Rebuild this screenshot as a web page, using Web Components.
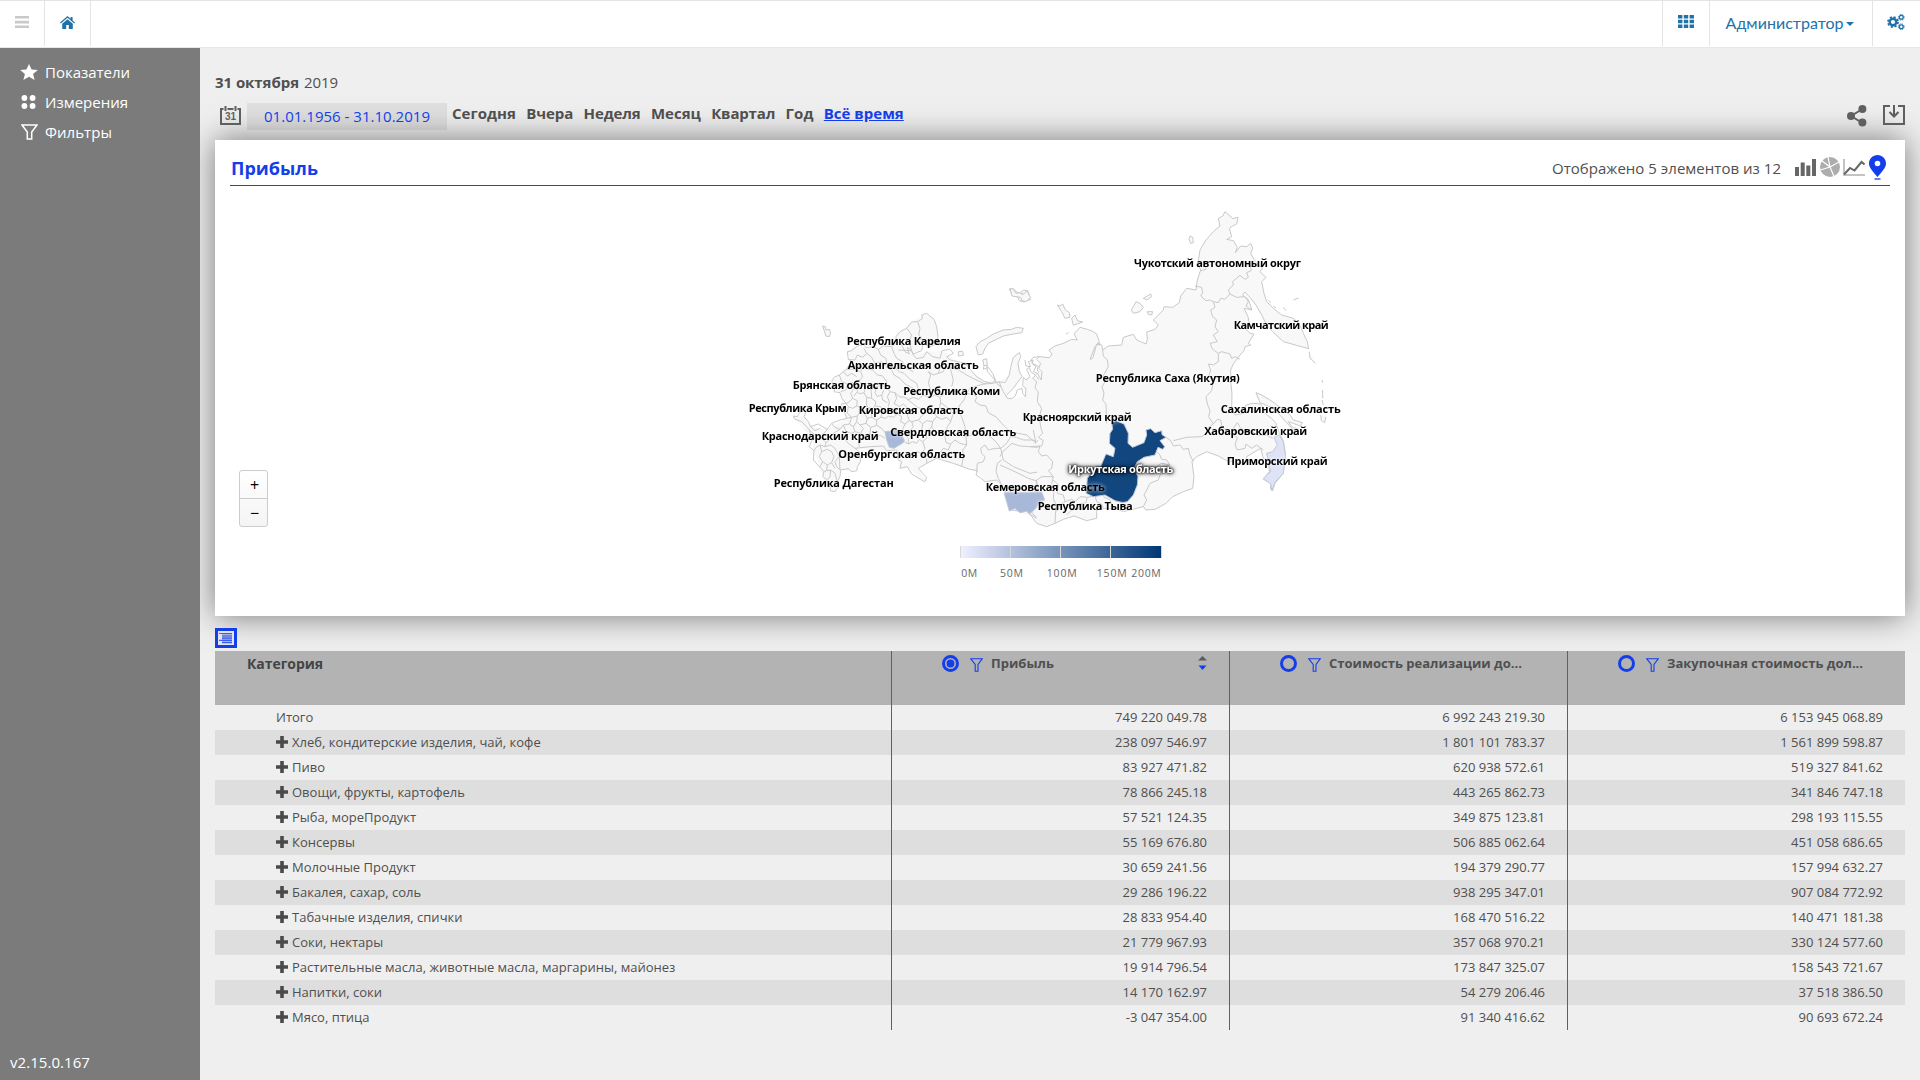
<!DOCTYPE html>
<html lang="ru">
<head>
<meta charset="utf-8">
<title>Прибыль</title>
<style>
html,body{margin:0;height:100%;overflow:hidden}
body{font-family:"Open Sans","Noto Sans",sans-serif;color:#4f4f4f;background:#efefef}
</style>
</head>
<body>
<bi-app></bi-app>
<script>
const define=(name,html,setup)=>customElements.define(name,class extends HTMLElement{
  connectedCallback(){
    if(this.shadowRoot)return;
    const r=this.attachShadow({mode:'open'});
    const t=document.createElement('template');
    t.innerHTML=typeof html==='function'?html(this):html;
    r.append(t.content.cloneNode(true));
    if(setup)setup(this,r);
  }
});

/* Single line of text spread to an exact width through letter-spacing */
define('fit-text','<style>:host{display:inline-block;white-space:nowrap}span{display:inline-block}:host([underline]) span{text-decoration:underline}</style><span><slot></slot></span>',(el,r)=>{
  const w=+el.getAttribute('w'),s=r.querySelector('span');
  const n=el.textContent.length,cur=s.getBoundingClientRect().width;
  if(w&&n)s.style.letterSpacing=((w-cur)/n)+'px';
  if(w)el.style.width=w+'px';
});

const ICONS={
 menu:[14,12,'<path d="M0 0h14v2.6H0zM0 4.8h14v2.6H0zM0 9.4h14V12H0z" fill="#c9c9c9"/>'],
 home:[15,13,'<path d="M7.5 0 0 6.4l.8 1L7.5 1.8l6.7 5.6.8-1-2.4-2V1h-2v1.7zM2.2 7.7V13h4V9h2.6v4h4V7.7L7.5 3.2z" fill="#2272a8"/>'],
 grid:[16,13,'<path d="M0 0h4.4v3.4H0zM5.8 0h4.4v3.4H5.8zM11.6 0H16v3.4h-4.4zM0 4.8h4.4v3.4H0zM5.8 4.8h4.4v3.4H5.8zM11.6 4.8H16v3.4h-4.4zM0 9.6h4.4V13H0zM5.8 9.6h4.4V13H5.8zM11.6 9.6H16V13h-4.4z" fill="#2272a8"/>'],
 gears:[18,16,'<g fill="none" stroke="#2272a8"><circle cx="6" cy="8" r="3.3" stroke-width="2.4"/><circle cx="6" cy="8" r="5" stroke-width="1.8" stroke-dasharray="2.1 1.83"/><circle cx="14.3" cy="3.3" r="1.9" stroke-width="1.3"/><circle cx="14.3" cy="3.3" r="2.8" stroke-width="1" stroke-dasharray="1.3 .9"/><circle cx="14.3" cy="12.7" r="1.9" stroke-width="1.3"/><circle cx="14.3" cy="12.7" r="2.8" stroke-width="1" stroke-dasharray="1.3 .9"/></g>'],
 caret:[8,4,'<path d="M0 0h8L4 4z" fill="#2272a8"/>'],
 star:[18,16,'<path d="m9 0 2.6 5.5 6.2.5-4.7 4 1.5 6L9 12.7 3.4 16l1.5-6L.2 6l6.2-.5z" fill="#fff"/>'],
 dots:[16,14,'<g fill="#fff"><circle cx="3.4" cy="3" r="2.9"/><circle cx="11.6" cy="3" r="2.9"/><circle cx="3.4" cy="11" r="2.9"/><circle cx="11.6" cy="11" r="2.9"/></g>'],
 funnelw:[17,16,'<path d="M1 1h15l-5.3 7v7H6.3V8z" fill="none" stroke="#fff" stroke-width="1.5"/>'],
 funnel:[13,14,'<path d="M.8.8h11.4L8 6.5v6.7H5.2V6.5z" fill="none" stroke="#143eea" stroke-width="1.1"/>'],
 calendar:[21,19,'<path d="M3.500 3H1v15h19V3h-2.500M7.500 3h6" fill="none" stroke="#5f5f5f" stroke-width="2"/><path d="M5.500 0v5M15.500 0v5" stroke="#5f5f5f" stroke-width="2"/><text x="5" y="14.300" textLength="11" font-family="Liberation Sans" font-weight="700" font-size="10" fill="#5f5f5f">31</text>'],
 share:[20,22,'<path d="M15.500 4 4 11l11.500 7" fill="none" stroke="#5f5f5f" stroke-width="2"/><g fill="#5f5f5f"><circle cx="15.400" cy="4" r="4"/><circle cx="4" cy="11" r="4"/><circle cx="15.400" cy="17.600" r="4"/></g>'],
 download:[22,20,'<path d="M7 1H1v18h20V1h-6" fill="none" stroke="#5f5f5f" stroke-width="2"/><path d="M11 0v11M6.500 7l4.500 4.500L15.500 7" fill="none" stroke="#5f5f5f" stroke-width="2"/>'],
 bars:[21,17,'<path d="M0 8h4v9H0zM5.700 3.500h4V17h-4zM11.300 6.500h4V17h-4zM17 0h4v17h-4z" fill="#666"/>'],
 pie:[20,20,'<circle cx="10" cy="10" r="10" fill="#adadad"/><path d="M8 0l2 10L1.500 3.500M10 10 .3 13M10 10l9-5M10 10l4 9.500" fill="none" stroke="#fff" stroke-width="1.200"/>'],
 line:[22,17,'<path d="M1 0v16h21" fill="none" stroke="#b0b0b0" stroke-width="1.500"/><path d="m1 15.500 6-6.500 4.500 2.500 7-8.500 3 2.500" fill="none" stroke="#666" stroke-width="2"/>'],
 pin:[17,25,'<path d="M8.500 0C3.800 0 0 3.700 0 8.500 0 13 4.500 17 8.500 22 12.500 17 17 13 17 8.500 17 3.700 13.200 0 8.500 0zm0 5.700a2.800 2.800 0 1 1 0 5.600 2.800 2.800 0 0 1 0-5.600z" fill="#143eea" fill-rule="evenodd"/><path d="M5.500 24h6" stroke="#143eea" stroke-width="1.300"/>'],
 plus:[12,12,'<path d="M4.200 0h3.600v4.200H12v3.600H7.800V12H4.200V7.800H0V4.200h4.200z" fill="#4a4a4a"/>'],
 radio:[17,17,'<circle cx="8.500" cy="8.500" r="7" fill="none" stroke="#143eea" stroke-width="3"/>'],
 radioon:[17,17,'<circle cx="8.500" cy="8.500" r="7" fill="#b3b3b3" stroke="#143eea" stroke-width="3"/><circle cx="8.500" cy="8.500" r="3.900" fill="#143eea"/>'],
 sort:[9,14,'<path d="M0 4.500 4.500 0 9 4.500z" fill="#5a5a5a"/><path d="M.5 9.500h8L4.500 14z" fill="#143eea"/>'],
 tree:[22,20,'<path d="M1.500 1.500h19v17h-19z" fill="#e2e2ea" stroke="#143eea" stroke-width="3"/><path d="M4 5.500h13M7 8h10M7 10.200h10M4 12.400h13M7 14.600h10" stroke="#143eea" stroke-width="1.200" opacity=".75"/><path d="M7 5h10v10H7z" fill="#143eea" opacity=".3"/>']
};
define('ui-icon',el=>{const [w,h,b]=ICONS[el.getAttribute('name')];
 return `<style>:host{display:block;flex:none;width:${w}px;height:${h}px}svg{display:block}</style><svg width="${w}" height="${h}" viewBox="0 0 ${w} ${h}">${b}</svg>`});

define('top-bar',`<style>
:host{display:flex;box-sizing:border-box;height:48px;background:#fff;border-top:1px solid #e4e4e4;border-bottom:1px solid #e7e7e7;justify-content:space-between;font-family:Lato,"Open Sans",sans-serif;font-size:16px;color:#2272a8}
div{display:flex}
.c{box-sizing:border-box;height:45px;align-items:center;justify-content:center}
.l .c{border-right:1px solid #e4e4e4}.r .c{border-left:1px solid #e4e4e4}
</style>
<div class="l"><div class="c" style="width:45px;padding:0 0 3px 0"><ui-icon name="menu"></ui-icon></div><div class="c" style="width:46px;padding-bottom:3px"><ui-icon name="home"></ui-icon></div></div>
<div class="r"><div class="c" style="width:47px;padding-bottom:4px"><ui-icon name="grid"></ui-icon></div>
<div class="c" style="width:163px;gap:2px;padding:0 3px 2px 0"><fit-text w="118">Администратор</fit-text><ui-icon name="caret" style="margin-top:2px"></ui-icon></div>
<div class="c" style="width:48px;padding:0 1px 3px 0"><ui-icon name="gears"></ui-icon></div></div>`);

define('side-bar',`<style>
:host{display:flex;flex-direction:column;justify-content:space-between;box-sizing:border-box;width:200px;flex:none;background:#7b7b7b;color:#fff;font-size:15px;padding:9px 0 8px;z-index:1}
.i{display:flex;align-items:center;height:30px;padding-left:20px}
.k{width:25px;display:flex}
.v{padding-left:10px;height:20px;line-height:20px}
</style><div>
<div class="i"><span class="k"><ui-icon name="star"></ui-icon></span><fit-text w="85">Показатели</fit-text></div>
<div class="i"><span class="k"><ui-icon name="dots" style="padding-left:1px"></ui-icon></span><fit-text w="83">Измерения</fit-text></div>
<div class="i"><span class="k"><ui-icon name="funnelw" style="padding-left:1px"></ui-icon></span><fit-text w="67">Фильтры</fit-text></div></div>
<div class="v"><fit-text w="80">v2.15.0.167</fit-text></div>`);

define('period-bar',`<style>
:host{display:block;height:92px;box-sizing:border-box;position:relative;z-index:1}
.d{padding-top:23px;font-size:15px;height:23px;line-height:23px}
.row{display:flex;height:27px;margin-top:9px;justify-content:space-between}
.g{display:flex;font-size:15px}
.cal{margin:3px 6px 0 5px}
.in{width:200px;height:27px;line-height:27px;background:rgba(0,0,0,.065);text-align:center;color:#143eea;font-size:15px;margin-right:5px}
.n{display:flex;gap:10.3px;line-height:20px;font-weight:700}.n .a{color:#143eea}
</style>
<div class="d"><fit-text w="84"><b>31 октября</b></fit-text><fit-text w="34" style="margin-left:5px">2019</fit-text></div>
<div class="row"><div class="g"><ui-icon class="cal" name="calendar"></ui-icon><div class="in"><fit-text w="166">01.01.1956 - 31.10.2019</fit-text></div>
<div class="n"><fit-text w="64">Сегодня</fit-text><fit-text w="47">Вчера</fit-text><fit-text w="57">Неделя</fit-text><fit-text w="50">Месяц</fit-text><fit-text w="64">Квартал</fit-text><fit-text w="28">Год</fit-text><fit-text class="a" underline w="80">Всё время</fit-text></div></div>
<div class="g" style="gap:16px;margin-top:2px"><ui-icon name="share"></ui-icon><ui-icon name="download"></ui-icon></div></div>`);

const LABELS=[['Республика Карелия',846.7,345,114],['Архангельская область',847.7,369,131],['Брянская область',792.7,389,98],['Республика Коми',903.3,395,97],['Республика Крым',748.7,412,98],['Кировская область',858.7,414,105],['Свердловская область',890.3,436,126],['Краснодарский край',761.7,440,117],['Оренбургская область',838.3,458,127],['Республика Дагестан',773.7,487,120],['Чукотский автономный округ',1134,267,167],['Камчатский край',1233.7,329,95],['Республика Саха (Якутия)',1095.7,382,144],['Красноярский край',1022.7,421,109],['Сахалинская область',1220.7,413,120],['Хабаровский край',1204.3,435,103],['Приморский край',1226.7,465,101],['Кемеровская область',985.7,491,119],['Республика Тыва',1037.7,510,95],['Иркутская область',1068.3,473,105,1]];
const P=(list,extra='')=>list.map(d=>`<path d="${d}"${extra}/>`).join('');
/* Each map half is drawn on its own grid, three units to a pixel */
const WEST=[
'M898 230 L880 232 873 240 880 252 895 258 892 270 905 292 902 305 890 290 882 282 872 275 868 262 860 268 870 290 858 300 850 292 848 318 858 325 856 350 848 340 846 325 832 330 826 348 815 356 802 355 790 335 782 318 778 305 795 308 808 285 812 262 820 232 838 218 842 230 834 250 838 275 846 290 832 308 820 325 800 345 M778 305 L757 310 735 305 710 290 690 268 675 250 655 245 630 240 620 230 640 220 630 208 606 212 600 235 578 230 560 215 550 232 530 236 520 225 512 208 502 202 508 222 495 215 M757 310 L765 300 742 275 740 250 735 240 730 268 745 262 758 280 770 310 784 322',
'M475 210 L515 212 520 222 545 212 548 196 538 188 543 172 550 190 570 200 590 192 594 170 590 140 582 118 560 100 545 105 548 115 533 125 515 126 500 145 480 155 468 170 470 188 455 200 430 198 415 208 400 200 378 203 370 194 352 198 335 212 322 215 325 238 335 244 320 268 310 275 298 285 282 292 275 305 285 322 282 335 300 338 306 355 318 370 303 372 315 400 320 415 300 420 275 430 262 448 248 440 235 432 212 440 205 425 192 410 198 395 182 393 172 410 160 408 165 418 185 425 200 440 208 450 216 480 208 500 222 512 220 540 238 560 252 575 248 590 262 600 258 612 272 622 270 632 285 635 294 622 292 605 300 590 302 572 290 560 285 545 298 530 300 570 325 566 335 575 350 572 352 560 362 545 358 515 345 505 390 500 430 498 440 512 470 510 475 540 485 545 480 565 502 560 515 582 545 600 555 605 560 592 548 580 535 565 560 550 590 535 640 550 690 568 712 572 708 585 720 592 735 605 770 600 785 615 800 640 815 690 850 695 870 690 890 715 898 700'];
const WFILL='M898 230 L905 292 870 290 850 300 856 350 815 356 800 350 840 300 846 290 834 250 838 218 820 235 808 285 778 305 765 300 735 305 655 245 606 212 560 215 520 225 475 205 510 220 545 212 543 172 570 200 594 180 590 140 582 118 560 100 515 126 468 170 470 188 415 208 352 198 322 215 335 244 298 285 275 305 306 355 303 372 320 415 262 448 212 440 192 410 160 408 216 480 222 512 238 560 258 612 285 635 302 572 298 530 300 570 335 575 362 545 345 505 440 512 470 510 480 565 502 560 555 605 535 565 590 535 712 572 735 605 785 615 815 690 890 715z';
const WBORD=[
'M325 238 345 240 352 225 368 232 380 220 372 205 M380 220 395 232 405 250 398 270 385 268 370 258 350 262 335 250 M398 270 412 285 428 288 440 305 438 322 M405 250 425 245 440 262 455 270 462 285 480 295 495 312 520 325 M415 208 422 225 438 235 440 250 460 258 478 275 492 280 510 298 530 310 535 330 M455 200 462 220 470 235 488 245 500 265 520 275 M495 215 490 205 482 188 470 188 M500 145 515 165 508 185 515 212 M533 125 540 145 536 165 543 172 M370 258 362 275 368 290 358 300 362 312',
'M310 275 322 288 335 280 350 290 M320 268 345 268 362 275 M298 285 305 305 322 312 318 330 302 335 M322 312 338 308 350 318 362 312 378 320 392 312 410 320 425 316 438 322 450 335 465 338 478 350 495 352 505 360 M338 308 342 325 332 340 338 355 325 368 318 370 M350 318 352 335 342 348 M378 320 372 338 358 342 352 335 M372 338 380 352 395 355 392 312 M395 355 408 365 405 378 M410 320 405 338 412 350 425 345 432 330 M425 345 428 360 442 368 M450 335 442 350 448 365 M465 338 470 355 462 370 478 380 490 372 505 385',
'M338 355 352 362 350 378 338 385 325 380 318 370 M350 378 365 385 380 378 380 352 M380 378 395 388 405 378 422 380 428 395 442 398 448 365 M325 380 322 400 335 412 320 415 M335 412 352 408 360 395 365 385 M360 395 375 402 382 415 395 412 395 388 M395 412 410 420 422 412 428 395 M422 412 438 415 445 408 460 412 472 402 468 390 442 398 M382 415 378 430 360 435 350 425 352 408 M378 430 392 442 410 436 410 420 M410 436 425 445 435 458 M335 412 328 432 340 440 350 425 M340 440 345 455 362 460 370 445 360 435 M362 460 375 470 390 462 392 442 M390 462 405 475 420 465 435 475 M328 432 310 435 300 448 285 442 275 430 M310 435 318 455 335 460 345 455 M318 455 312 475 325 490 345 505 M362 460 355 485 358 500',
'M472 402 485 410 482 425 495 432 508 422 502 405 512 392 505 385 M495 432 488 448 495 462 508 455 520 440 515 425 508 422 M515 425 535 420 548 405 545 388 530 380 505 360 M535 420 548 432 560 422 578 425 590 410 582 395 565 392 548 405 M502 360 520 352 535 358 550 345 568 352 585 345 600 352 615 338 632 335 640 340 M535 330 550 345 M568 352 572 330 565 308 572 285 565 275 580 285 595 280 600 265 592 250 M595 280 610 275 615 258 630 262 635 280 M630 262 655 270 680 285 705 298 735 312 757 310 M635 280 640 302 635 320 M632 335 655 332 M582 395 598 385 602 368 600 352 M590 410 605 418 620 412 632 425 622 440 618 455 600 462 585 455 575 440 578 425 M548 432 545 450 558 460 575 440',
'M665 410 655 395 640 400 632 425 M680 340 672 360 660 375 650 395 640 400 625 385 602 368 M665 410 675 440 678 470 680 495 668 510 670 530 665 560 M680 495 660 490 645 480 632 492 618 488 615 470 618 455 M632 492 625 510 610 505 600 518 590 535 M558 460 560 475 548 485 538 478 530 490 518 485 505 492 493 485 M548 485 555 505 545 520 530 515 520 530 508 525 498 535 M545 520 560 535 560 550 M495 462 505 475 505 492',
'M678 470 705 462 730 460 745 465 762 480 770 488 782 505 M782 505 800 490 812 470 830 472 850 480 880 480 890 485 896 478 M782 505 790 540 820 560 870 580 900 575 M782 505 765 505 745 510 735 495 722 505 725 520 735 530 730 545 712 550 710 575 M785 540 772 550 768 575 775 595 785 615 M800 640 830 625 870 632 895 625 M888 640 890 600 M880 450 888 490',
'M680 340 705 345 710 352 705 365 720 375 738 378 745 398 770 412 785 430 810 455 835 460 860 465 888 490 M680 340 690 325 710 318 740 310',
'M216 480 232 470 245 475 250 462 262 448 M245 475 258 488 270 478 280 460 300 448 M258 488 255 500 240 495 228 502 222 512 M212 440 225 452 240 445 M208 450 225 465 M240 495 245 515 238 530 248 545 240 560 M245 515 262 508 275 515 282 530 275 548 285 565 M255 500 272 495 285 505 298 530 M248 545 262 555 260 572 252 575 M260 572 272 570 285 580 292 605 M262 555 275 548 M272 570 270 590 262 600'];
const WISLE=['M248 138 256 140 258 150 268 148 272 158 268 170 258 168 252 150z','M850 145 845 158 820 162 790 168 765 180 745 190 735 205 728 222 715 225 708 200 720 185 740 175 760 162 790 150 815 148 830 142z','M655 215 668 214 670 226 655 228z','M728 240 740 236 742 258 732 256z','M808 28 820 26 830 36 840 40 850 30 862 32 868 44 860 50 872 58 852 66 838 62 832 50 818 46z M820 32 828 44M845 38 856 50 848 60'];
const EAST='M118 470 L148 473 156 462 147 450 165 438 190 430 215 418 232 420 222 402 240 382 262 388 280 395 290 402 298 425 288 440 278 475 270 478 285 440 293 430 305 435 308 450 325 438 365 435 370 412 400 403 410 420 438 432 442 418 440 396 465 388 475 375 460 360 470 350 490 330 492 320 518 322 538 308 542 288 560 265 588 270 592 240 602 210 594 190 600 150 618 120 640 95 660 78 655 55 668 48 675 35 690 48 698 56 714 52 710 72 698 78 688 85 695 110 680 118 700 122 712 142 706 158 722 138 740 140 752 130 758 145 752 160 768 188 788 205 780 215 798 232 785 245 792 280 800 305 820 325 845 345 880 355 898 372 910 400 922 425 926 446 890 436 850 425 818 395 800 375 785 345 768 315 752 295 735 276 728 285 745 298 756 330 732 325 744 350 748 370 735 385 750 400 762 402 745 430 752 435 735 440 732 452 720 465 700 492 692 510 692 545 696 580 695 625 705 645 730 640 738 615 758 610 782 612 795 640 815 655 828 670 838 700 850 722 856 760 850 820 825 850 818 872 812 868 812 850 790 838 808 815 805 785 790 775 782 745 765 755 740 770 735 790 700 785 680 782 655 768 620 755 590 770 576 785 582 830 578 865 550 875 518 890 498 910 465 928 438 930 430 920 398 928 370 935 345 925 315 925 290 930 290 955 260 962 222 948 190 958 165 970 140 980 110 970 90 942 110 955';
const EBORD=['M118 470 110 478 122 490 116 505 126 515 124 540 112 520 100 515 108 500 95 490 100 480 85 485 92 500 78 498 75 480 M112 520 98 535 110 545 105 565 115 575 112 605 125 625 118 650 122 680 128 700 115 712 130 722 125 738 90 740 M308 450 310 468 322 480 325 500 308 530 315 545 306 560 312 580 308 600 318 612 320 670 M585 258 605 262 608 278 602 288 618 302 630 300 640 305 M640 305 655 308 662 295 675 298 690 282 710 292 735 290 745 305 738 318 755 330 M690 282 685 270 700 255 698 245 720 226 735 238 745 232 740 218 754 212 750 195 735 190 M640 305 645 322 632 330 638 350 650 360 645 380 655 395 640 405 652 425 630 430 638 448 655 460 M655 460 665 455 675 458 690 462 695 475 705 470 720 478 M655 460 655 485 640 495 625 492 632 510 626 530 640 545 635 572 618 590 622 612 630 632 626 650 640 672 652 658 662 660 666 680 M640 672 625 682 620 700 605 710 560 712 520 722 M495 710 512 722 520 738 540 735 550 748 565 745 570 765 580 785 M666 680 690 700 712 712 705 735 712 750 735 745 738 732 755 745 770 735 790 750 M705 700 700 685 712 668 722 685 735 692 755 695 775 705 800 705 818 715 M470 755 480 765 485 778 500 780 510 795 495 800 500 815 480 825 475 840 450 850 440 870 432 885 440 900 430 920 M510 795 485 790 465 802 440 798 412 805 M598 190 615 195 618 208 602 212',
'M0 770 8 755 20 745 35 730 60 738 88 740 112 742 120 738 115 755 125 768 140 765 158 785 155 805 145 812 160 830 125 830 108 842 85 835 65 825 30 808 0 795 M160 830 155 850 162 870 160 895 168 915 165 970 M108 842 115 858 112 875 M160 840 175 855 172 880 190 885 195 905 180 915 170 935 M195 905 215 898 225 905 240 890 262 892 285 888 M262 892 258 908 238 912 235 928 215 930 200 945 M285 888 290 905 305 912 310 925 M310 890 330 900 340 925'];
const EISLE=['M570 108 578 112 580 128 572 130 567 118z','M172 315 180 318 188 312 196 330 208 338 210 352 195 355 185 335z','M215 355 225 345 232 362 248 366 220 376z','M400 320 408 305 420 310 430 322 420 335 400 340 394 330z','M430 295 452 282 455 290 440 300z','M442 335 458 335 455 345 445 343z','M768 578 785 585 810 600 845 625 870 645 880 660 908 668 900 678 880 670 865 665 875 680 895 688 880 690 860 668 835 640 810 620 780 608z','M880 300 896 294 M928 455 930 475 938 482 946 490 M966 540 968 548 M968 570 968 595 M966 600 970 615 M962 645 964 662 974 668 978 650','M30 265 40 268 48 280 58 278 68 284 82 272 86 284 92 292 78 305 66 302 62 292 48 290 36 288z','M300 430 294 428 297 436z','M198 402 206 398 M805 300 812 308 M850 322 858 332 M820 318 828 324'];
const SHAPES={
 irk:'M335 668 348 662 372 672 385 700 384 730 398 742 432 728 440 705 438 690 452 686 465 698 485 692 486 704 498 712 480 722 494 740 488 748 474 742 465 765 432 772 412 785 402 805 414 830 412 855 400 885 382 905 368 908 345 902 315 885 280 890 258 880 262 835 290 800 302 800 308 785 318 762 340 770 345 745 328 730 330 700 338 688z',
 alt:'M12 878 125 876 134 900 118 905 110 922 102 930 88 942 80 934 60 938 45 925 28 933z',
 prim:'M822 712 838 705 850 725 857 770 850 820 824 848 816 872 812 852 790 835 812 815 805 785 800 760 818 755 832 735z',
 sam:'M435 455 475 450 493 480 490 488 462 505 448 502 440 480z'};
const T=l=>`<text x="${l[1]}" y="${l[2]}" textLength="${l[3]}" class="${l[4]?'w':''}">${l[0]}</text>`;
define('region-map',`<style>
:host{display:block;position:relative;height:430px}
svg{display:block}
.m path{fill:none;stroke:#c8c8c8;stroke-width:3;stroke-linejoin:round}.m .f{fill:#f8f8f8}.m .n{stroke:none;fill:#f8f8f8}
.m .s{stroke:#c0c8d8}
text{font:700 11px "Open Sans","Noto Sans",sans-serif;fill:#000;filter:drop-shadow(0 0 2px #fff)}
.w{fill:#fff;filter:drop-shadow(0 0 1px #000) drop-shadow(0 0 2px #000)}
.lg text{font-weight:400;font-size:10.5px;fill:#666;filter:none}
.z{position:absolute;left:24px;top:284px;width:27px;height:55px;border:1px solid #ccc;border-radius:3px;display:flex;flex-direction:column;color:#000;text-align:center;font-size:16px;line-height:29px;background:linear-gradient(#fff,#f4f4f4)}
.z i{font-style:normal;height:27px;padding-left:2px}.z i+i{border-top:1px solid #ccc}
</style>
<svg width="1690" height="430" viewBox="215 186 1690 430"><defs><linearGradient id="g"><stop offset="0" stop-color="#efefff"/><stop offset="1" stop-color="#003875"/></linearGradient></defs>
<g class="m"><g transform="translate(740 280) scale(.33333)"><path class="n" d="${WFILL}"/>${P(WEST)}${P(WBORD)}${P(WISLE,' class="f"')}<path class="s" style="fill:#a8b8d8" d="${SHAPES.sam}"/></g>
<g transform="translate(1000 200) scale(.33333)"><path class="f" d="${EAST}"/>${P(EBORD)}${P(EISLE,' class="f"')}
<path class="s" style="fill:#a8b8d8" d="${SHAPES.alt}"/><path class="s" style="fill:#dfe3f6" d="${SHAPES.prim}"/><path class="s" style="fill:#12467f" d="${SHAPES.irk}"/></g></g>
${LABELS.map(T).join('')}
<g class="lg"><rect x="961" y="546" width="200" height="12" fill="url(#g)"/><path d="M960.500 546v12M1010.500 546v12M1060.500 546v12M1110.500 546v12M1161.500 546v12" stroke="#d8d8d8"/>
${[['0M',961.3,577,16],['50M',1000,577,23],['100M',1046.7,577,30],['150M',1096.7,577,30],['200M',1131.3,577,29.5]].map(T).join('')}</g></svg>
<div class="z"><i>+</i><i>−</i></div>`);

define('chart-card',`<style>
:host{display:block;height:476px;background:#fff;box-shadow:0 0 30px rgba(0,0,0,.5)}
header{display:flex;box-sizing:border-box;height:46px;margin:0 15px;padding:11px 4px 0 1px;border-bottom:1px solid #1a45d6;justify-content:space-between}
h1{margin:0;font-size:18px;line-height:34px;color:#143eea}
.r{display:flex;align-items:flex-start;font-size:15px;line-height:34px}
</style><header><h1><fit-text w="87">Прибыль</fit-text></h1><div class="r"><fit-text w="229" style="margin-right:14px">Отображено 5 элементов из 12</fit-text>
<ui-icon name="bars" style="margin:8px 4px 0 0"></ui-icon><ui-icon name="pie" style="margin:6px 3px 0 0"></ui-icon><ui-icon name="line" style="margin:8px 4px 0 0"></ui-icon><ui-icon name="pin" style="margin-top:4px"></ui-icon></div></header><region-map></region-map>`);

const ROWS=[['Итого','749 220 049.78','6 992 243 219.30','6 153 945 068.89'],['Хлеб, кондитерские изделия, чай, кофе','238 097 546.97','1 801 101 783.37','1 561 899 598.87'],['Пиво','83 927 471.82','620 938 572.61','519 327 841.62'],['Овощи, фрукты, картофель','78 866 245.18','443 265 862.73','341 846 747.18'],['Рыба, мореПродукт','57 521 124.35','349 875 123.81','298 193 115.55'],['Консервы','55 169 676.80','506 885 062.64','451 058 686.65'],['Молочные Продукт','30 659 241.56','194 379 290.77','157 994 632.27'],['Бакалея, сахар, соль','29 286 196.22','938 295 347.01','907 084 772.92'],['Табачные изделия, спички','28 833 954.40','168 470 516.22','140 471 181.38'],['Соки, нектары','21 779 967.93','357 068 970.21','330 124 577.60'],['Растительные масла, животные масла, маргарины, майонез','19 914 796.54','173 847 325.07','158 543 721.67'],['Напитки, соки','14 170 162.97','54 279 206.46','37 518 386.50'],['Мясо, птица','-3 047 354.00','91 340 416.62','90 693 672.24']];
define('pivot-table',`<style>
:host{display:block;font-size:13px}
.r{display:grid;grid-template-columns:676px 338px 338px 338px;height:25px;line-height:25px}
.r>div{box-sizing:border-box;border-left:1px solid #606060;text-align:right;padding-right:22px}
.r>div:first-child{border:0;display:flex;align-items:center;padding-left:61px;gap:4px;text-align:left}
.r ui-icon[name=plus]{margin-top:-1px}
.r.s{background:#dedede}
.r.h{height:54px;background:#b3b3b3;font-weight:700;line-height:25px}
.r.h>div{display:flex;padding-left:50px;padding-right:22px}
.r.h>div:first-child{align-items:flex-start;padding-left:32px;font-size:14px;color:#444}
.h ui-icon[name^=radio]{margin:4px 11px 0 0}.h ui-icon[name=funnel]{margin:7px 8px 0 0}.h ui-icon[name=sort]{margin:5px 0 0 auto}
</style><div class="r h"><div><fit-text w="76">Категория</fit-text></div>
<div><ui-icon name="radioon"></ui-icon><ui-icon name="funnel"></ui-icon><fit-text w="63">Прибыль</fit-text><ui-icon name="sort"></ui-icon></div>
<div><ui-icon name="radio"></ui-icon><ui-icon name="funnel"></ui-icon><fit-text w="193">Стоимость реализации до...</fit-text></div>
<div><ui-icon name="radio"></ui-icon><ui-icon name="funnel"></ui-icon><fit-text w="196">Закупочная стоимость дол...</fit-text></div></div>
${ROWS.map((r,i)=>`<div class="r ${i%2?'s':''}"><div>${i?'<ui-icon name="plus"></ui-icon>':''}<span>${r[0]}</span></div><div>${r[1]}</div><div>${r[2]}</div><div>${r[3]}</div></div>`).join('')}`);

define('bi-app',`<style>
:host{display:flex;flex-direction:column;height:100vh;width:100%}
.b{display:flex;flex:1;min-height:0}
main{flex:1;box-sizing:border-box;padding:0 15px;overflow:hidden}
.t{height:20px;margin:12px 0 3px}
</style><top-bar></top-bar><div class="b"><side-bar></side-bar><main><period-bar></period-bar><chart-card></chart-card><div class="t"><ui-icon name="tree"></ui-icon></div><pivot-table></pivot-table></main></div>`);
</script>
</body>
</html>
